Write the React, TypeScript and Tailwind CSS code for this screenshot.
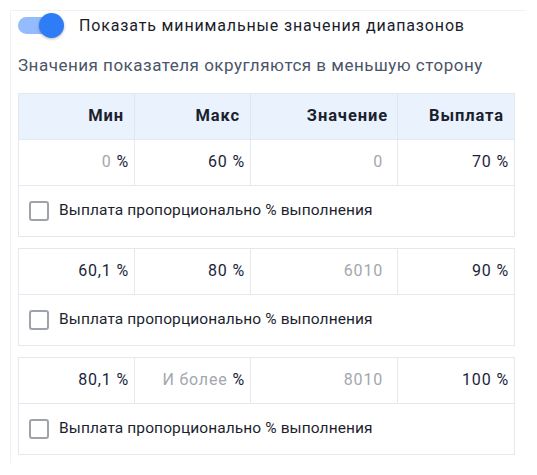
import React from "react";

type Row = {
  min: string;
  minGray?: boolean;
  max: string;
  maxGray?: boolean;
  value: string;
  pay: string;
};

const rows: Row[] = [
  { min: "0", minGray: true, max: "60", value: "0", pay: "70" },
  { min: "60,1", max: "80", value: "6010", pay: "90" },
  { min: "80,1", max: "И более", maxGray: true, value: "8010", pay: "100" },
];

function Checkbox() {
  return (
    <div className="flex h-[50px] items-center pl-[10px]">
      <span className="box-border block h-[20px] w-[20px] rounded-[3px] border-2 border-[#9ea3aa] bg-white" />
      <span className="ml-[10px] text-[15.5px] tracking-[0.1px] text-[#1c1f2e]">
        Выплата пропорционально % выполнения
      </span>
    </div>
  );
}

function PctCell({ v, gray, last }: { v: string; gray?: boolean; last?: boolean }) {
  return (
    <div
      className={
        "flex h-[45px] items-center justify-end pr-[5px] text-[16px] tracking-[0.8px] " +
        (last ? "" : "border-r border-[#e4e8ef]")
      }
    >
      <span className={gray ? "text-[#a3a7ae]" : "text-[#1c1f3a]"}>{v}</span>
      <span className="ml-[5px] text-[#1c1f3a]">%</span>
    </div>
  );
}

function Table({ row, header }: { row: Row; header?: boolean }) {
  return (
    <div className="w-[497px] border border-[#e4e8ef] bg-white">
      {header && (
        <div className="grid h-[46px] grid-cols-[116px_116px_147px_116px] border-b border-[#e4e8ef] bg-[#e9f2fd] text-[16.5px] font-bold tracking-[0.9px] text-[#1c1f2e]">
          <div className="flex items-center justify-end border-r border-[#dde6f1] pr-[10px]">Мин</div>
          <div className="flex items-center justify-end border-r border-[#dde6f1] pr-[10px]">Макс</div>
          <div className="flex items-center justify-end border-r border-[#dde6f1] pr-[9px]">Значение</div>
          <div className="flex items-center justify-end pr-[10px]">Выплата</div>
        </div>
      )}
      <div className="grid grid-cols-[116px_116px_147px_116px] border-b border-[#e4e8ef]">
        <PctCell v={row.min} gray={row.minGray} />
        <PctCell v={row.max} gray={row.maxGray} />
        <div className="flex h-[45px] items-center justify-end border-r border-[#e4e8ef] pr-[14px] text-[16px] tracking-[0.8px] text-[#a3a7ae]">
          {row.value}
        </div>
        <PctCell v={row.pay} last />
      </div>
      <Checkbox />
    </div>
  );
}

export default function App() {
  return (
    <div
      className="h-[475px] w-[537px] bg-white pl-[10px] pt-[10px]"
      style={{ fontFamily: "Roboto, 'Noto Sans', sans-serif" }}
    >
      <div className="h-[453px] w-[516px] border-l border-t border-[#f1f2f4] pl-[7px]">
        <div className="flex h-[27px] items-center pt-[2px]">
          <div className="relative h-[17px] w-[42px] rounded-full bg-[#94bbfb]">
            <div className="absolute right-[-4px] top-[-4px] h-[25px] w-[25px] rounded-full bg-[#2f7df6] shadow-[0_1px_3px_rgba(0,0,0,0.3)]" />
          </div>
          <span className="ml-[19px] text-[16px] tracking-[0.85px] text-[#1a1d2c]">
            Показать минимальные значения диапазонов
          </span>
        </div>
        <div className="mt-[15px] text-[17px] tracking-[0.5px] text-[#4a5568]">
          Значения показателя округляются в меньшую сторону
        </div>
        <div className="mt-[14px] flex flex-col gap-[11px]">
          <Table row={rows[0]} header />
          <Table row={rows[1]} />
          <Table row={rows[2]} />
        </div>
      </div>
    </div>
  );
}
